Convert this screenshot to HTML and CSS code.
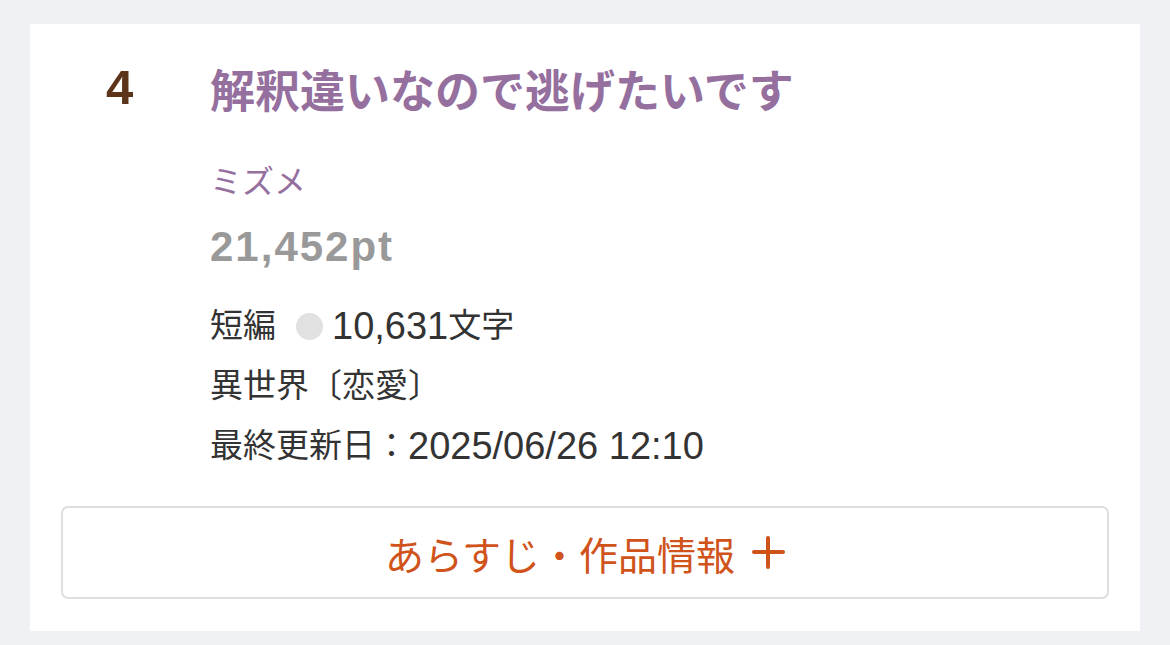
FILE: index.html
```html
<!DOCTYPE html>
<html lang="ja">
<head>
    <meta charset="UTF-8">
    <meta name="viewport" content="width=device-width, initial-scale=1.0">
    <title>ランキング</title>
    <link rel="stylesheet" href="styles.css">
</head>
<body>
    <div class="rank-card">
        <div class="rank-row">
            <div class="rank-num">4</div>
            <div class="rank-body">
                <h2 class="work-title">解釈違いなので逃げたいです</h2>
                <div class="author">ミズメ</div>
                <div class="points">21,452pt</div>
                <ul class="meta">
                    <li>短編<span class="dot"></span><span class="num">10,631</span>文字</li>
                    <li>異世界〔恋愛〕</li>
                    <li>最終更新日：<span class="num">2025/06/26 12:10</span></li>
                </ul>
            </div>
        </div>
        <button type="button" class="more-btn">あらすじ・作品情報<span class="plus"></span></button>
    </div>
</body>
</html>
```

FILE: styles.css
```css
body { margin: 0; background-color: #f0f1f5; font-family: "Liberation Sans", "Noto Sans CJK JP", sans-serif; color: #333; }
.rank-card { margin: 24px 30px 15px; background-color: #fff; padding: 44px 31px 32px; }
.rank-row { display: flex; }
.rank-num { width: 149px; padding-left: 45px; box-sizing: border-box; flex-shrink: 0; font-size: 49px; font-weight: bold; color: #5b3419; line-height: 38px; }
.rank-body { flex: 1; }
.work-title { margin: 0; font-size: 45px; line-height: 50px; color: #95709f; font-weight: bold; }
.author { margin-top: 46px; font-size: 32px; line-height: 36px; color: #95709f; }
.points { margin-top: 24px; font-size: 42px; line-height: 46px; font-weight: bold; letter-spacing: 2px; color: #999; }
.meta { list-style: none; margin: 26px 0 0; padding: 0; font-size: 33px; line-height: 60px; color: #333; }
.meta li { display: flex; align-items: center; }
.meta .num { font-size: 38px; }
.dot { display: inline-block; width: 27px; height: 27px; border-radius: 50%; background-color: #e1e1e1; margin: 0 9px 0 20px; }
.more-btn { display: flex; align-items: center; justify-content: center; width: 100%; height: 93px; margin-top: 30px; background-color: #fff; border: 2px solid #dcdee2; border-radius: 7px; font-family: inherit; font-size: 39px; color: #d0531b; cursor: pointer; }
.plus { position: relative; width: 33px; height: 33px; margin-left: 17px; }
.plus::before, .plus::after { content: ""; position: absolute; background-color: #d0531b; border-radius: 2px; }
.plus::before { left: 0; right: 0; top: 14px; height: 4px; }
.plus::after { top: 0; bottom: 0; left: 14px; width: 4px; }
```
